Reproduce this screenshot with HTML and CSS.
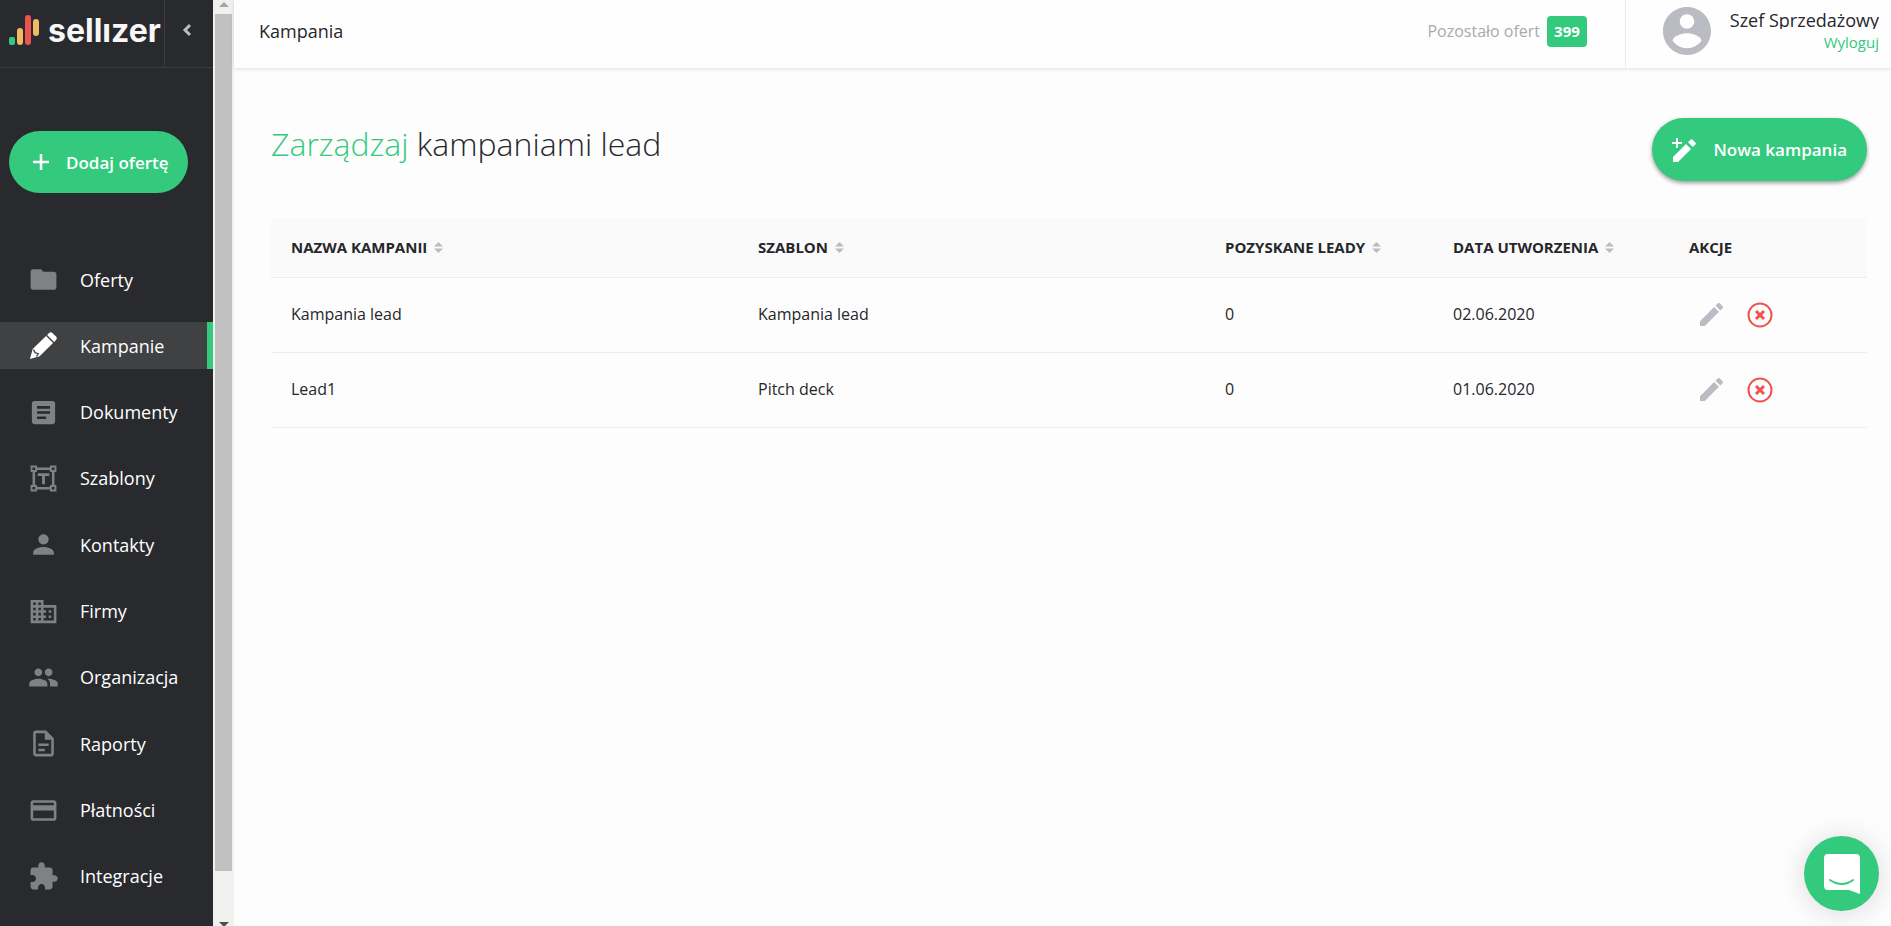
FILE: index.html
```html
<!DOCTYPE html>
<html lang="pl">
<head>
<meta charset="UTF-8">
<meta name="viewport" content="width=device-width, initial-scale=1.0">
<title>Kampania - sellizer</title>
<link rel="stylesheet" href="styles.css">
</head>
<body>

<div class="app">
  <!-- Sidebar -->
  <aside class="sidebar">
    <div class="sidebar-head">
      <a class="logo" href="#">
        <svg class="logo-mark" viewBox="0 0 30 30" aria-hidden="true">
          <rect x="0" y="22" width="6" height="8" rx="2" fill="#34ca7e"/>
          <rect x="8" y="13" width="6" height="17" rx="3" fill="#f2b866"/>
          <rect x="16" y="0" width="6" height="30" rx="3" fill="#ef5350"/>
          <rect x="24" y="4" width="6" height="17" rx="3" fill="#f2b866"/>
        </svg>
        <span class="logo-text">sellızer</span>
      </a>
      <button class="collapse" type="button" aria-label="Zwiń menu">
        <svg viewBox="0 0 10 14"><path d="M8 2 3 7l5 5" fill="none" stroke="currentColor" stroke-width="3"/></svg>
      </button>
    </div>

    <button class="button add-button" type="button">
      <svg viewBox="0 0 16 16" aria-hidden="true"><path d="M8 0v16M0 8h16" stroke="currentColor" stroke-width="2.500"/></svg>
      <span>Dodaj ofertę</span>
    </button>

    <nav class="menu">
      <a href="#">
        <svg viewBox="0 0 24 24"><path d="M10 4H4c-1.1 0-2 .9-2 2v12c0 1.1.9 2 2 2h16c1.1 0 2-.9 2-2V8c0-1.1-.9-2-2-2h-8z"/></svg>
        Oferty
      </a>
      <a class="active" href="#">
        <svg viewBox="0 0 24 24"><path d="M1.500 22.500 3.600 14.800 14 4.600l5.400 5.400L9 20.400zM14.800 3.800l1.500-1.500c.8-.8 1.800-.8 2.600 0l2.800 2.800c.8.8.8 1.800 0 2.600l-1.500 1.500z"/><path class="cut" d="M4.200 15.200l1.300 2.300 2.500.9-1.500 2"/></svg>
        Kampanie
      </a>
      <a href="#">
        <svg viewBox="0 0 24 24"><path d="M19 3H5c-1.100 0-2 .9-2 2v14c0 1.100.9 2 2 2h14c1.100 0 2-.9 2-2V5c0-1.100-.9-2-2-2zm-5 14H7v-2h7v2zm3-4H7v-2h10v2zm0-4H7V7h10v2z"/></svg>
        Dokumenty
      </a>
      <a href="#">
        <svg viewBox="0 0 24 24"><path fill-rule="evenodd" d="M22 7V2h-5v1.500H7V2H2v5h1.500v10H2v5h5v-1.500h10V22h5v-5h-1.500V7zM3.500 3.500h2v2h-2zm2 17h-2v-2h2zM17 18.500H7V17H5.500V7H7V5.500h10V7h1.500v10H17zm3.500 2h-2v-2h2zm-2-15v-2h2v2zM7.500 8h9v2h-3.400v6.500h-2.200V10H7.500z"/></svg>
        Szablony
      </a>
      <a href="#">
        <svg viewBox="0 0 24 24"><path d="M12 12c2.210 0 4-1.790 4-4s-1.790-4-4-4-4 1.790-4 4 1.790 4 4 4zm0 2c-2.670 0-8 1.340-8 4v2h16v-2c0-2.660-5.330-4-8-4z"/></svg>
        Kontakty
      </a>
      <a href="#">
        <svg viewBox="0 0 24 24"><path d="M12 7V3H2v18h20V7H12zM6 19H4v-2h2v2zm0-4H4v-2h2v2zm0-4H4V9h2v2zm0-4H4V5h2v2zm4 12H8v-2h2v2zm0-4H8v-2h2v2zm0-4H8V9h2v2zm0-4H8V5h2v2zm10 12h-8v-2h2v-2h-2v-2h2v-2h-2V9h8v10zm-2-8h-2v2h2v-2zm0 4h-2v2h2v-2z"/></svg>
        Firmy
      </a>
      <a href="#">
        <svg viewBox="0 0 24 24"><path d="M16 11c1.660 0 2.990-1.340 2.990-3S17.660 5 16 5c-1.660 0-3 1.340-3 3s1.340 3 3 3zm-8 0c1.660 0 2.990-1.340 2.990-3S9.660 5 8 5C6.340 5 5 6.340 5 8s1.340 3 3 3zm0 2c-2.330 0-7 1.170-7 3.500V19h14v-2.500c0-2.330-4.670-3.500-7-3.500zm8 0c-.29 0-.62.020-.97.050 1.160.84 1.970 1.970 1.970 3.450V19h6v-2.500c0-2.330-4.670-3.500-7-3.500z"/></svg>
        Organizacja
      </a>
      <a href="#">
        <svg viewBox="0 0 24 24"><path fill-rule="evenodd" d="M14 2H6c-1.100 0-2 .9-2 2v16c0 1.100.9 2 2 2h12c1.100 0 2-.9 2-2V8zM6 4h7v5h5v11H6zM8 12h8v2H8zM8 16h5v2H8z"/></svg>
        Raporty
      </a>
      <a href="#">
        <svg viewBox="0 0 24 24"><path d="M20 4H4c-1.110 0-2 .89-2 2v12c0 1.110.89 2 2 2h16c1.110 0 2-.89 2-2V6c0-1.110-.89-2-2-2zm0 14H4v-6h16v6zm0-10H4V6h16v2z"/></svg>
        Płatności
      </a>
      <a href="#">
        <svg viewBox="0 0 24 24"><path d="M20.500 11H19V7c0-1.100-.9-2-2-2h-4V3.500C13 2.120 11.880 1 10.500 1S8 2.120 8 3.500V5H4c-1.100 0-1.990.9-1.990 2v3.800H3.500c1.490 0 2.700 1.210 2.700 2.700s-1.210 2.700-2.700 2.700H2V20c0 1.100.9 2 2 2h3.800v-1.500c0-1.490 1.210-2.700 2.700-2.700 1.490 0 2.700 1.210 2.700 2.700V22H17c1.100 0 2-.9 2-2v-4h1.500c1.380 0 2.500-1.120 2.500-2.500S21.880 11 20.500 11z"/></svg>
        Integracje
      </a>
    </nav>
  </aside>

  <div class="scrollbar" aria-hidden="true">
    <span class="arrow arrow-up"></span>
    <span class="thumb"></span>
    <span class="arrow arrow-down"></span>
  </div>

  <!-- Page -->
  <div class="page">
    <header class="topbar">
      <h1>Kampania</h1>
      <div class="offers-left">Pozostało ofert <span class="badge">399</span></div>
      <div class="user">
        <svg class="avatar" viewBox="2 2 20 20" aria-hidden="true"><path d="M12 2C6.480 2 2 6.480 2 12s4.480 10 10 10 10-4.480 10-10S17.520 2 12 2zm0 3c1.660 0 3 1.340 3 3s-1.340 3-3 3-3-1.340-3-3 1.340-3 3-3zm0 14.200c-2.500 0-4.710-1.280-6-3.220.03-1.990 4-3.080 6-3.080 1.990 0 5.970 1.090 6 3.080-1.290 1.940-3.500 3.220-6 3.220z"/></svg>
        <div class="user-info">
          <div class="user-name">Szef Sprzedażowy</div>
          <a class="logout" href="#">Wyloguj</a>
        </div>
      </div>
    </header>

    <main class="content">
      <div class="title-row">
        <h2><span>Zarządzaj</span> kampaniami lead</h2>
        <button class="button new-button" type="button">
          <svg viewBox="0 0 24 24" aria-hidden="true"><path d="M1 19v5h5L19 11 14 6zM23.400 6.400c.6-.5.6-1.300 0-1.900L20.500 1.700c-.5-.6-1.300-.6-1.900 0L16 4.300 20.800 9zM4 0h2v4h4v2H6v4H4V6H0V4h4z"/></svg>
          Nowa kampania
        </button>
      </div>

      <table class="campaigns">
        <colgroup>
          <col><col><col class="col-leads"><col class="col-date"><col class="col-actions"><col class="col-end">
        </colgroup>
        <thead>
          <tr>
            <th>Nazwa kampanii <svg class="sort" viewBox="0 0 10 12"><path d="M0 5l5-5 5 5zM0 7h10l-5 5z"/></svg></th>
            <th>Szablon <svg class="sort" viewBox="0 0 10 12"><path d="M0 5l5-5 5 5zM0 7h10l-5 5z"/></svg></th>
            <th>Pozyskane leady <svg class="sort" viewBox="0 0 10 12"><path d="M0 5l5-5 5 5zM0 7h10l-5 5z"/></svg></th>
            <th>Data utworzenia <svg class="sort" viewBox="0 0 10 12"><path d="M0 5l5-5 5 5zM0 7h10l-5 5z"/></svg></th>
            <th>Akcje</th>
            <th></th>
          </tr>
        </thead>
        <tbody>
          <tr>
            <td>Kampania lead</td>
            <td>Kampania lead</td>
            <td>0</td>
            <td>02.06.2020</td>
            <td>
              <div class="actions">
                <button class="edit" type="button" aria-label="Edytuj"><svg viewBox="3 3 18 18"><path d="M3 17.250V21h3.750L17.810 9.940l-3.750-3.750L3 17.250zM20.710 7.040c.39-.39.39-1.020 0-1.410l-2.340-2.340c-.39-.39-1.020-.39-1.410 0l-1.830 1.830 3.750 3.750 1.830-1.830z"/></svg></button>
                <button class="delete" type="button" aria-label="Usuń"><svg viewBox="0 0 26 26"><circle cx="13" cy="13" r="11.500"/><path d="M9 9l8 8M17 9l-8 8"/></svg></button>
              </div>
            </td>
            <td></td>
          </tr>
          <tr>
            <td>Lead1</td>
            <td>Pitch deck</td>
            <td>0</td>
            <td>01.06.2020</td>
            <td>
              <div class="actions">
                <button class="edit" type="button" aria-label="Edytuj"><svg viewBox="3 3 18 18"><path d="M3 17.250V21h3.750L17.810 9.940l-3.750-3.750L3 17.250zM20.710 7.040c.39-.39.39-1.020 0-1.410l-2.340-2.340c-.39-.39-1.020-.39-1.410 0l-1.830 1.830 3.750 3.750 1.830-1.830z"/></svg></button>
                <button class="delete" type="button" aria-label="Usuń"><svg viewBox="0 0 26 26"><circle cx="13" cy="13" r="11.500"/><path d="M9 9l8 8M17 9l-8 8"/></svg></button>
              </div>
            </td>
            <td></td>
          </tr>
        </tbody>
      </table>
    </main>
  </div>
</div>

<!-- Chat -->
<button class="chat" type="button" aria-label="Czat">
  <svg viewBox="0 0 36 40"><path d="M4 0h28a4 4 0 0 1 4 4v36l-11-4H4a4 4 0 0 1-4-4V4a4 4 0 0 1 4-4z" fill="#fff"/><path d="M6 26q12 8 23 0" fill="none" stroke="#34ca7e" stroke-width="2" stroke-linecap="round"/></svg>
</button>

</body>
</html>
```
FILE: styles.css
```css
* {
  box-sizing: border-box;
}
body, h1, h2 {
  margin: 0;
  padding: 0;
}
body {
  font-family: "Open Sans", "Noto Sans", sans-serif;
  font-size: 16px;
  color: #26272b;
  background: #fdfdfd;
}
a {
  text-decoration: none;
}
button {
  padding: 0;
  border: none;
  background: none;
  font-family: inherit;
  cursor: pointer;
}
svg {
  display: block;
  flex: none;
  fill: currentColor;
}
.app {
  display: flex;
  height: 100vh;
  overflow: hidden;
}

/* Sidebar */
.sidebar {
  display: flex;
  flex-direction: column;
  width: 213px;
  flex: none;
  background: #292a2e;
}
.sidebar-head {
  display: flex;
  height: 68px;
  flex: none;
  border-bottom: 1px solid #3c3d40;
}
.logo {
  display: flex;
  gap: 9px;
  width: 165px;
  padding: 15px 0 0 9px;
  border-right: 1px solid #3c3d40;
  overflow: hidden;
  color: #f7f7f8;
}
.logo-mark {
  width: 30px;
  height: 30px;
}
.logo-text {
  font-family: Inter, sans-serif;
  font-size: 32px;
  font-weight: 700;
  line-height: 32px;
}
.collapse {
  display: flex;
  align-items: flex-start;
  flex: 1;
  padding: 23px 0 0 17px;
  color: #bcbcc5;
}
.collapse svg {
  width: 10px;
  height: 14px;
}
.button {
  display: flex;
  align-items: center;
  border-radius: 32px;
  background: #34ca7e;
  color: white;
  font-size: 17px;
  font-weight: 600;
  white-space: nowrap;
}
.add-button {
  gap: 17px;
  width: 179px;
  height: 62px;
  flex: none;
  margin: 63px 0 0 9px;
  padding-left: 24px;
}
.add-button svg {
  width: 16px;
  height: 16px;
}
.menu {
  display: flex;
  flex-direction: column;
  justify-content: space-between;
  flex: 1;
  padding: 63px 0 26px;
}
.menu a {
  display: flex;
  align-items: center;
  gap: 21px;
  height: 47px;
  padding-left: 28px;
  color: white;
  font-size: 18px;
}
.menu svg {
  width: 31px;
  height: 31px;
  fill: #808184;
}
.menu .active {
  border-right: 6px solid #34ca7e;
  background: #404143;
}
.menu .active svg {
  fill: white;
}
.menu .cut {
  fill: none;
  stroke: #404143;
  stroke-width: 1;
}

/* Sidebar scrollbar */
.scrollbar {
  display: flex;
  flex-direction: column;
  align-items: center;
  width: 21px;
  flex: none;
  background: #f1f1ef;
}
.arrow {
  border: 5px solid transparent;
}
.arrow-up {
  margin: -3px 0 7px;
  border-bottom-color: #a5a5a5;
}
.thumb {
  flex: 1;
  width: 17px;
  background: #c1c1c1;
}
.arrow-down {
  margin: 51px 0 -6px;
  border-top-color: #505050;
}

/* Page */
.page {
  flex: 1;
  min-width: 0;
}
.topbar {
  display: flex;
  align-items: center;
  height: 68px;
  padding: 0 12px 6px 25px;
  background: #fefefe;
  box-shadow: 0 1px 4px rgba(0, 0, 0, 0.12);
}
.topbar h1 {
  margin-right: auto;
  font-size: 18px;
  font-weight: 400;
}
.offers-left {
  display: flex;
  align-items: center;
  gap: 7px;
  margin-right: 38px;
  color: #a9aaae;
}
.badge {
  padding: 0 7px;
  border-radius: 4px;
  background: #34ca7e;
  color: white;
  font-size: 15px;
  font-weight: 700;
  line-height: 31px;
}
.user {
  display: flex;
  align-items: center;
  gap: 19px;
  height: 68px;
  margin-bottom: -6px;
  padding: 0 0 7px 37px;
  border-left: 1px solid #ececee;
}
.avatar {
  width: 48px;
  height: 48px;
  fill: #bbbbc4;
}
.user-info {
  padding-top: 4px;
  text-align: right;
}
.user-name {
  overflow: hidden;
  font-size: 18px;
  line-height: 18px;
}
.logout {
  color: #34ca7e;
  font-size: 15px;
  line-height: 26px;
}
.content {
  padding: 50px 24px 0 37px;
}
.title-row {
  display: flex;
  align-items: flex-start;
  justify-content: space-between;
  margin-bottom: 37px;
}
.title-row h2 {
  font-size: 32px;
  font-weight: 300;
  line-height: 52px;
}
.title-row h2 span {
  color: #34ca7e;
}
.new-button {
  gap: 18px;
  height: 63px;
  padding: 0 20px;
  box-shadow: 0 2px 4px rgba(0, 0, 0, 0.4);
}
.new-button svg {
  width: 24px;
  height: 24px;
}

/* Table */
.campaigns {
  width: 100%;
  border-collapse: collapse;
  table-layout: fixed;
}
.col-leads {
  width: 228px;
}
.col-date {
  width: 236px;
}
.col-actions {
  width: 153px;
}
.col-end {
  width: 45px;
}
.campaigns th {
  height: 59px;
  padding: 0 0 0 20px;
  background: #fafafa;
  font-size: 15px;
  font-weight: 700;
  text-align: left;
  text-transform: uppercase;
  white-space: nowrap;
}
.campaigns td {
  height: 75px;
  padding: 0 0 2px 20px;
}
.campaigns tr {
  border-bottom: 1px solid #ececee;
}
.sort {
  display: inline-block;
  width: 9px;
  height: 11px;
  margin-left: 3px;
  fill: #bbbbc4;
}
.actions {
  display: flex;
  align-items: center;
  gap: 24px;
  padding: 2px 0 0 11px;
}
.edit svg {
  width: 23px;
  height: 23px;
  fill: #bbbbc4;
}
.delete svg {
  width: 26px;
  height: 26px;
  fill: none;
  stroke: #ef5350;
  stroke-width: 2;
}
.delete path {
  stroke-width: 3;
}

/* Floats over the page */
.chat {
  display: flex;
  align-items: center;
  justify-content: center;
  position: fixed;
  right: 12px;
  bottom: 15px;
  width: 75px;
  height: 75px;
  border-radius: 50%;
  background: #34ca7e;
  box-shadow: 0 2px 28px rgba(0, 0, 0, 0.14);
}
.chat svg {
  width: 36px;
  height: 40px;
}
```
